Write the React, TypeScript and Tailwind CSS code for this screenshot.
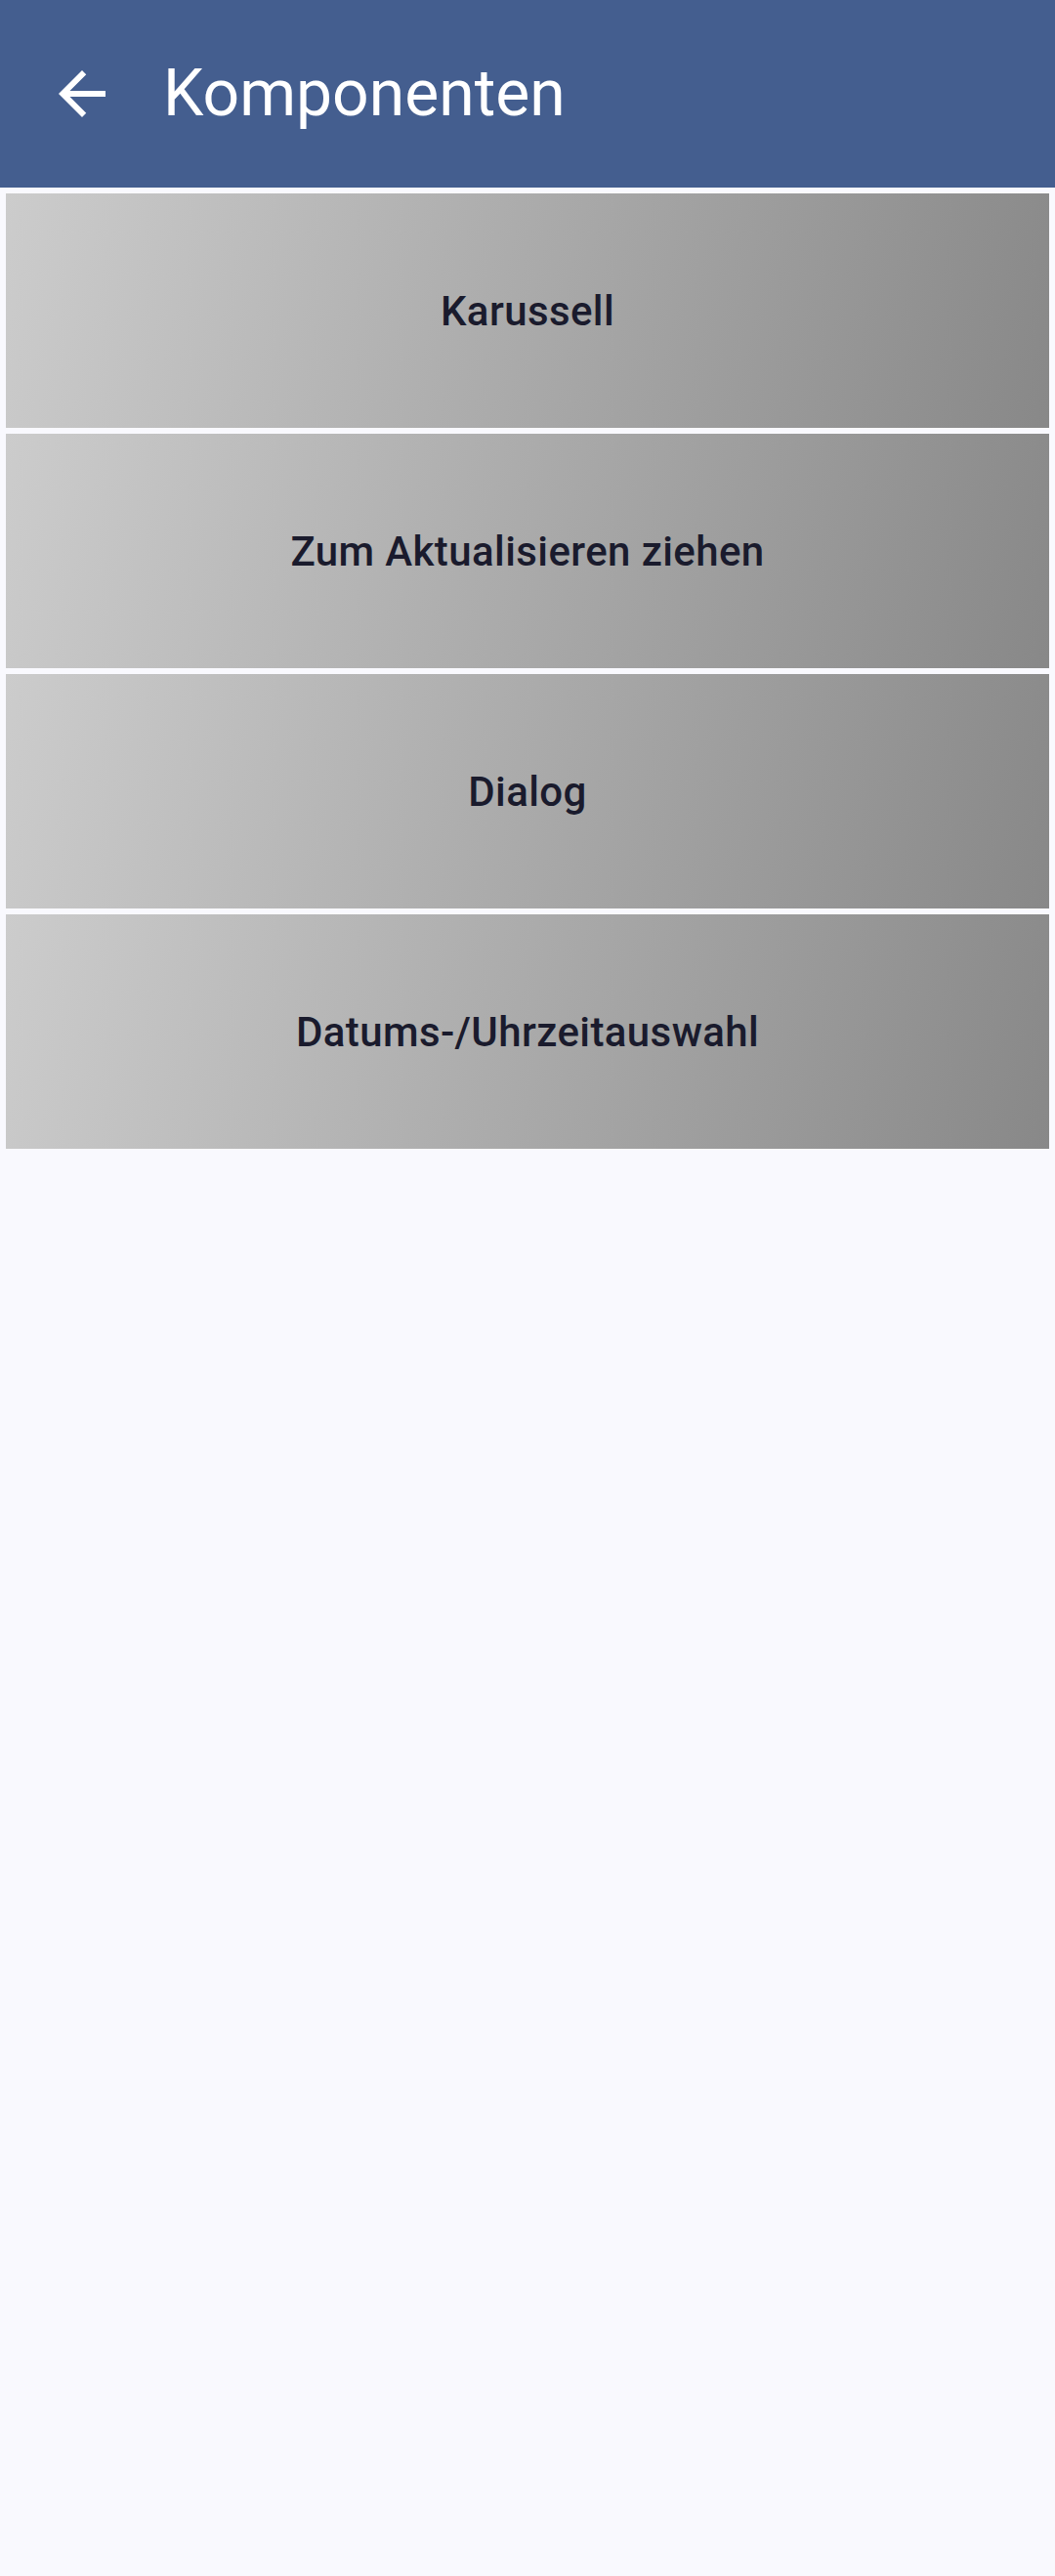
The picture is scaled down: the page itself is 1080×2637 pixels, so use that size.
const items = [
  "Karussell",
  "Zum Aktualisieren ziehen",
  "Dialog",
  "Datums-/Uhrzeitauswahl",
];

function BackArrow() {
  return (
    <svg width="72" height="72" viewBox="0 0 24 24" fill="white">
      <path d="M20 11H7.83l5.59-5.59L12 4l-8 8 8 8 1.41-1.41L7.83 13H20v-2z" />
    </svg>
  );
}

export default function App() {
  return (
    <div className="min-h-[2637px] w-[1080px] bg-[#f9f9fe] font-['Roboto',sans-serif]">
      <header className="flex h-[192px] items-center bg-[#445e8f]">
        <button className="ml-[48px] flex h-[72px] w-[72px] items-center justify-center">
          <BackArrow />
        </button>
        <h1 className="ml-[47px] text-[66px] font-normal leading-none text-white">
          Komponenten
        </h1>
      </header>

      <div className="flex flex-col gap-[6px] px-[6px] pt-[6px]">
        {items.map((label) => (
          <div
            key={label}
            className="flex h-[240px] items-center justify-center bg-[linear-gradient(103deg,#cccccc,#888888)]"
          >
            <span className="text-[42px] font-medium tracking-[0.4px] text-[#1a1b2d]">
              {label}
            </span>
          </div>
        ))}
      </div>
    </div>
  );
}
